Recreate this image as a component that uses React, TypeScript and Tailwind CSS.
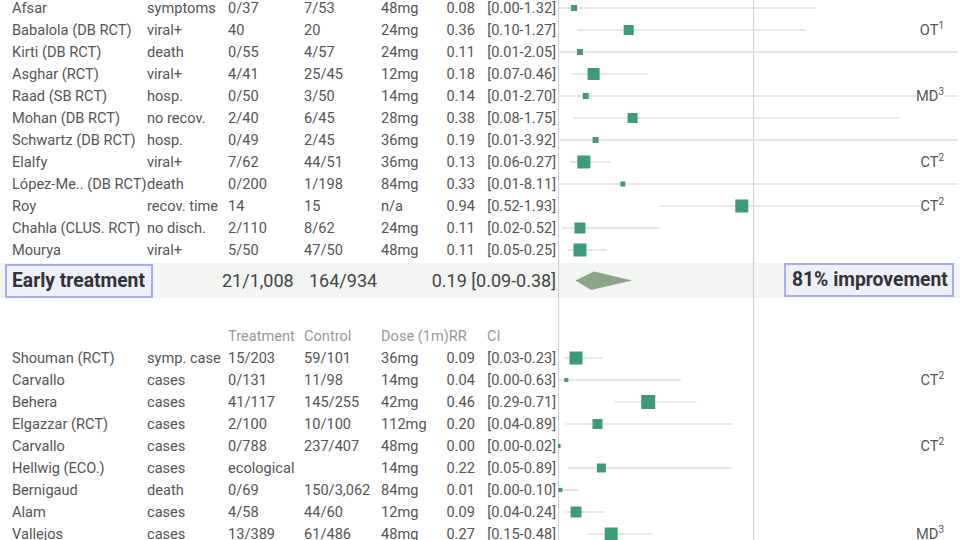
import React from "react";

type Study = {
  name: string;
  outcome: string;
  treat: string;
  ctrl: string;
  dose: string;
  rr: number;
  lo: number;
  hi: number;
  size: number;
  tag?: string;
  sup?: string;
};

const early: Study[] = [
  { name: "Afsar", outcome: "symptoms", treat: "0/37", ctrl: "7/53", dose: "48mg", rr: 0.08, lo: 0.0, hi: 1.32, size: 6 },
  { name: "Babalola (DB RCT)", outcome: "viral+", treat: "40", ctrl: "20", dose: "24mg", rr: 0.36, lo: 0.1, hi: 1.27, size: 10, tag: "OT", sup: "1" },
  { name: "Kirti (DB RCT)", outcome: "death", treat: "0/55", ctrl: "4/57", dose: "24mg", rr: 0.11, lo: 0.01, hi: 2.05, size: 6 },
  { name: "Asghar (RCT)", outcome: "viral+", treat: "4/41", ctrl: "25/45", dose: "12mg", rr: 0.18, lo: 0.07, hi: 0.46, size: 12 },
  { name: "Raad (SB RCT)", outcome: "hosp.", treat: "0/50", ctrl: "3/50", dose: "14mg", rr: 0.14, lo: 0.01, hi: 2.7, size: 6, tag: "MD", sup: "3" },
  { name: "Mohan (DB RCT)", outcome: "no recov.", treat: "2/40", ctrl: "6/45", dose: "28mg", rr: 0.38, lo: 0.08, hi: 1.75, size: 10 },
  { name: "Schwartz (DB RCT)", outcome: "hosp.", treat: "0/49", ctrl: "2/45", dose: "36mg", rr: 0.19, lo: 0.01, hi: 3.92, size: 6 },
  { name: "Elalfy", outcome: "viral+", treat: "7/62", ctrl: "44/51", dose: "36mg", rr: 0.13, lo: 0.06, hi: 0.27, size: 13, tag: "CT", sup: "2" },
  { name: "López-Me.. (DB RCT)", outcome: "death", treat: "0/200", ctrl: "1/198", dose: "84mg", rr: 0.33, lo: 0.01, hi: 8.11, size: 5 },
  { name: "Roy", outcome: "recov. time", treat: "14", ctrl: "15", dose: "n/a", rr: 0.94, lo: 0.52, hi: 1.93, size: 13, tag: "CT", sup: "2" },
  { name: "Chahla (CLUS. RCT)", outcome: "no disch.", treat: "2/110", ctrl: "8/62", dose: "24mg", rr: 0.11, lo: 0.02, hi: 0.52, size: 11 },
  { name: "Mourya", outcome: "viral+", treat: "5/50", ctrl: "47/50", dose: "48mg", rr: 0.11, lo: 0.05, hi: 0.25, size: 13 },
];

const prophylaxis: Study[] = [
  { name: "Shouman (RCT)", outcome: "symp. case", treat: "15/203", ctrl: "59/101", dose: "36mg", rr: 0.09, lo: 0.03, hi: 0.23, size: 13 },
  { name: "Carvallo", outcome: "cases", treat: "0/131", ctrl: "11/98", dose: "14mg", rr: 0.04, lo: 0.0, hi: 0.63, size: 4, tag: "CT", sup: "2" },
  { name: "Behera", outcome: "cases", treat: "41/117", ctrl: "145/255", dose: "42mg", rr: 0.46, lo: 0.29, hi: 0.71, size: 14 },
  { name: "Elgazzar (RCT)", outcome: "cases", treat: "2/100", ctrl: "10/100", dose: "112mg", rr: 0.2, lo: 0.04, hi: 0.89, size: 10 },
  { name: "Carvallo", outcome: "cases", treat: "0/788", ctrl: "237/407", dose: "48mg", rr: 0.0, lo: 0.0, hi: 0.02, size: 4, tag: "CT", sup: "2" },
  { name: "Hellwig (ECO.)", outcome: "cases", treat: "ecological", ctrl: "", dose: "14mg", rr: 0.22, lo: 0.05, hi: 0.89, size: 9 },
  { name: "Bernigaud", outcome: "death", treat: "0/69", ctrl: "150/3,062", dose: "84mg", rr: 0.01, lo: 0.0, hi: 0.1, size: 4 },
  { name: "Alam", outcome: "cases", treat: "4/58", ctrl: "44/60", dose: "12mg", rr: 0.09, lo: 0.04, hi: 0.24, size: 11 },
  { name: "Vallejos", outcome: "cases", treat: "13/389", ctrl: "61/486", dose: "48mg", rr: 0.27, lo: 0.15, hi: 0.48, size: 13, tag: "MD", sup: "3" },
];

// 0 -> x=0, 1 -> x=195 inside the plot column (linear scale)
const PX = 195;
const PLOT_W = 400;
const fmt = (n: number) => n.toFixed(2);

const Grid = ({ h }: { h: number }) => (
  <>
    <line x1={0.5} y1={0} x2={0.5} y2={h} stroke="#d2d2d2" strokeWidth={1.2} />
    <line x1={PX + 0.5} y1={0} x2={PX + 0.5} y2={h} stroke="#d2d2d2" strokeWidth={1.2} />
  </>
);

const Plot = ({ h, children }: { h: number; children?: React.ReactNode }) => (
  <svg width={PLOT_W} height={h} className="block">
    <Grid h={h} />
    {children}
  </svg>
);

const Tag = ({ tag, sup }: { tag: string; sup: string }) => (
  <span className="absolute right-[14px] top-0 bg-white leading-[22px] text-[14.6px] text-[#555]">
    {tag}
    <sup className="text-[10px] relative -top-[6px]">{sup}</sup>
  </span>
);

const Row = ({ s }: { s: Study }) => {
  const y = 11;
  return (
    <div className="flex h-[22px] items-stretch leading-[22px] text-[14.6px] text-[#555]">
      <div className="w-[135px] shrink-0 whitespace-nowrap pl-[12px] box-content">{s.name}</div>
      <div className="w-[81px] shrink-0 whitespace-nowrap">{s.outcome}</div>
      <div className="w-[76px] shrink-0 whitespace-nowrap">{s.treat}</div>
      <div className="w-[77px] shrink-0 whitespace-nowrap">{s.ctrl}</div>
      <div className="w-[62px] shrink-0 whitespace-nowrap">{s.dose}</div>
      <div className="w-[32px] shrink-0 text-right">{fmt(s.rr)}</div>
      <div className="w-[81px] shrink-0 text-right whitespace-nowrap">[{fmt(s.lo)}-{fmt(s.hi)}]</div>
      <div className="w-[2px] shrink-0" />
      <div className="relative">
        <Plot h={22}>
          <line
            x1={s.lo * PX}
            y1={y}
            x2={Math.min(s.hi * PX, PLOT_W)}
            y2={y}
            stroke="#cfcfcf"
            strokeWidth={1.2}
          />
          <rect x={s.rr * PX - s.size / 2 + 0.5} y={y - s.size / 2} width={s.size} height={s.size} fill="#3e9b78" />
        </Plot>
        {s.tag && <Tag tag={s.tag} sup={s.sup || ""} />}
      </div>
    </div>
  );
};

const Spacer = ({ h }: { h: number }) => (
  <div className="flex" style={{ height: h }}>
    <div className="w-[558px] shrink-0" />
    <Plot h={h} />
  </div>
);

export default function App() {
  return (
    <div className="w-[960px] h-[540px] overflow-hidden bg-white" style={{ fontFamily: "Roboto, 'Liberation Sans', sans-serif" }}>
      <div className="-mt-[3px]">
        {early.map((s, i) => (
          <Row key={"e" + i} s={s} />
        ))}

        <Spacer h={2} />

        {/* summary band */}
        <div className="flex h-[35px] items-center bg-[#f3f5f2] text-[18px] text-[#444]">
          <div className="w-[5px] shrink-0" />
          <div className="w-[148px] h-[34px] shrink-0 border-2 border-[#a6abf2] bg-[#eef0fc] px-[5px] leading-[30px] text-[19.3px] font-bold text-[#333] whitespace-nowrap">
            Early treatment
          </div>
          <div className="w-[69px] shrink-0" />
          <div className="w-[87px] shrink-0">21/1,008</div>
          <div className="w-[72px] shrink-0">164/934</div>
          <div className="w-[175px] shrink-0 text-right whitespace-nowrap">0.19 [0.09-0.38]</div>
          <div className="w-[2px] shrink-0" />
          <div className="relative h-full flex items-center">
            <Plot h={35}>
              <polygon points="17.5,17.5 36,8.5 74,17.5 33,27" fill="#89a687" />
            </Plot>
            <div className="absolute right-[4px] top-0 w-[170px] h-[34px] border-2 border-[#a6abf2] bg-[#eef0fc] px-[6px] leading-[30px] text-[19.3px] font-bold text-[#333] whitespace-nowrap">
              81% improvement
            </div>
          </div>
        </div>

        <Spacer h={27} />

        {/* header row */}
        <div className="flex h-[22px] leading-[22px] text-[14.6px] text-[#9a9a9a]">
          <div className="w-[228px] shrink-0" />
          <div className="w-[76px] shrink-0">Treatment</div>
          <div className="w-[77px] shrink-0">Control</div>
          <div className="w-[94px] shrink-0 whitespace-nowrap">Dose (1m)RR</div>
          <div className="w-[81px] shrink-0 pl-[12px]">CI</div>
          <div className="w-[2px] shrink-0" />
          <Plot h={22} />
        </div>

        {prophylaxis.map((s, i) => (
          <Row key={"p" + i} s={s} />
        ))}
        <Spacer h={40} />
      </div>
    </div>
  );
}
